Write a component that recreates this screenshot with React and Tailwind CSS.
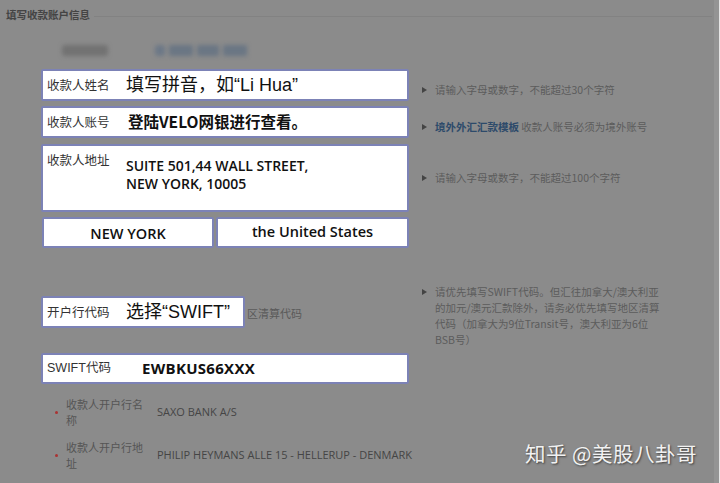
import React from 'react';

const cjk = "font-['Noto_Sans_CJK_SC',sans-serif]";
const latin = "font-['Open_Sans','Noto_Sans_CJK_SC',sans-serif]";
const helv = "font-['Liberation_Sans','Noto_Sans_CJK_SC',sans-serif]";

function Box({ className = '', children }) {
  return (
    <div className={`bg-white border-2 border-[#7c82b6] rounded-[2px] ${className}`}>
      {children}
    </div>
  );
}

function Hint({ children, className = '' }) {
  return (
    <div className={`flex items-start gap-[8px] text-[10.5px] leading-[16px] text-[#5c5c5c] ${className}`}>
      <span className="mt-[5px] w-0 h-0 border-y-[3px] border-y-transparent border-l-[5px] border-l-[#444] shrink-0" />
      <div>{children}</div>
    </div>
  );
}

export default function App() {
  return (
    <div className={`w-[720px] h-[483px] bg-[#8b8b8b] relative overflow-hidden flex ${cjk}`}>
      <div className="w-[714px] flex flex-col">
        {/* Header */}
        <div className="h-[30px] flex items-center pl-[6px] pr-[2px] gap-[4px]">
          <span className="text-[10.5px] font-bold text-[#444]">填写收款账户信息</span>
          <div className="flex-1 h-px bg-[#828282] mt-[2px]" />
        </div>

        {/* blurred tabs */}
        <div className="mt-[14px] h-[12px] flex items-center blur-[2px]">
          <div className="ml-[62px] w-[46px] h-[11px] bg-[#727272] rounded-[3px]" />
          <div className="ml-[47px] w-[92px] h-[11px] flex gap-[4px]">
            <div className="w-[10px] h-full bg-[#6c7887] rounded-[3px]" />
            <div className="w-[24px] h-full bg-[#6a7684]" />
            <div className="w-[22px] h-full bg-[#6a7684]" />
            <div className="w-[24px] h-full bg-[#6a7684]" />
          </div>
        </div>

        {/* Row 1 */}
        <div className="mt-[13px] flex">
          <Box className="ml-[41px] w-[368px] h-[32px] flex items-center pl-[4px]">
            <span className="w-[79px] text-[12.5px] text-[#333]">收款人姓名</span>
            <span className={`text-[18px] text-[#111] ${helv}`}>填写拼音，如“Li Hua”</span>
          </Box>
          <Hint className="ml-[13px] pt-[13px]">请输入字母或数字，不能超过30个字符</Hint>
        </div>

        {/* Row 2 */}
        <div className="mt-[5px] flex">
          <Box className="ml-[41px] w-[368px] h-[32px] flex items-center pl-[4px]">
            <span className="w-[81px] text-[12.5px] text-[#333]">收款人账号</span>
            <span className="text-[15.5px] font-bold text-[#111]">登陆VELO网银进行查看。</span>
          </Box>
          <Hint className="ml-[13px] pt-[13px]">
            <span className="text-[#2d4a6a] font-bold">境外外汇汇款模板</span> 收款人账号必须为境外账号
          </Hint>
        </div>

        {/* Row 3 */}
        <div className="mt-[6px] flex">
          <Box className="ml-[41px] w-[368px] h-[68px] flex items-start pl-[4px]">
            <span className="w-[79px] pt-[6px] text-[12.5px] leading-[16px] text-[#333]">收款人地址</span>
            <div className={`pt-[11px] text-[14px] leading-[18px] font-semibold text-[#111] ${latin}`}>
              <div>SUITE 501,44 WALL STREET,</div>
              <div>NEW YORK, 10005</div>
            </div>
          </Box>
          <Hint className="ml-[13px] pt-[26px]">请输入字母或数字，不能超过100个字符</Hint>
        </div>

        {/* Row 4 */}
        <div className="mt-[5px] flex gap-[2px] ml-[42px]">
          <Box className={`w-[172px] h-[31px] flex items-center justify-center pt-[3px] text-[14.5px] font-semibold text-[#111] ${latin}`}>
            NEW YORK
          </Box>
          <Box className={`w-[193px] h-[31px] flex items-center justify-center pb-[2px] text-[14.5px] font-semibold text-[#111] ${latin}`}>
            the United States
          </Box>
        </div>

        {/* Row 5 */}
        <div className="mt-[36px] flex">
          <div className="w-[381px] flex items-start">
            <Box className="ml-[41px] mt-[12px] w-[204px] h-[32px] flex items-center pl-[4px]">
              <span className="w-[79px] text-[12.5px] text-[#333]">开户行代码</span>
              <span className={`text-[18px] text-[#111] ${helv}`}>选择“SWIFT”</span>
            </Box>
            <span className="mt-[21px] ml-[2px] text-[11px] text-[#5a5a5a]">区清算代码</span>
          </div>
          <Hint className="ml-[41px]">
            请优先填写SWIFT代码。但汇往加拿大/澳大利亚<br />
            的加元/澳元汇款除外，请务必优先填写地区清算<br />
            代码（加拿大为9位Transit号，澳大利亚为6位<br />
            BSB号）
          </Hint>
        </div>

        {/* Row 6 */}
        <div className="mt-[5px] flex">
          <Box className="ml-[41px] w-[368px] h-[31px] flex items-center pl-[4px]">
            <span className={`w-[95px] text-[12.5px] text-[#333] ${helv}`}>SWIFT代码</span>
            <span className={`text-[15px] font-bold text-[#111] tracking-[0.3px] ${latin}`}>EWBKUS66XXX</span>
          </Box>
        </div>

        {/* Detail rows */}
        <div className="mt-[12px] flex items-center pl-[55px]">
          <span className="w-[3px] h-[3px] rounded-full bg-[#a33] shrink-0" />
          <span className="ml-[8px] w-[78px] text-[11px] leading-[16px] text-[#555]">收款人开户行名称</span>
          <span className={`ml-[13px] text-[11px] text-[#454545] ${latin}`}>SAXO BANK A/S</span>
        </div>
        <div className="mt-[11px] flex items-center pl-[55px]">
          <span className="w-[3px] h-[3px] rounded-full bg-[#a33] shrink-0" />
          <span className="ml-[8px] w-[78px] text-[11px] leading-[16px] text-[#555]">收款人开户行地址</span>
          <span className={`ml-[13px] text-[11px] text-[#454545] ${latin}`}>PHILIP HEYMANS ALLE 15 - HELLERUP - DENMARK</span>
        </div>
      </div>
      <div className="w-[5px] bg-[#949494]" />
      <div className="w-px bg-[#e6e6e6]" />

      {/* watermark */}
      <div className="absolute left-[525px] top-[438px] text-[20.5px] text-[#f2f2f2] [text-shadow:1px_1px_2px_rgba(0,0,0,0.55)] tracking-[0.5px]">
        知乎 @美股八卦哥
      </div>
    </div>
  );
}
